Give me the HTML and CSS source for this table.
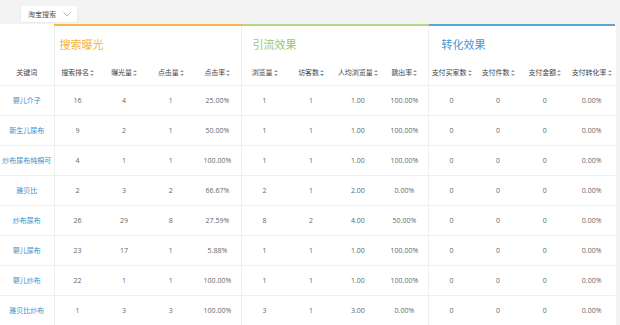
FILE: index.html
```html
<!DOCTYPE html>
<html lang="zh">
<head>
<meta charset="utf-8">
<link rel="stylesheet" href="styles.css">
</head>
<body>
<div class="topbar">
  <div class="select">淘宝搜索
    <svg class="chev" width="8" height="5" viewBox="0 0 8 5"><path d="M0.5 0.5 L4 4 L7.5 0.5" fill="none" stroke="#b5b5b5" stroke-width="1"/></svg>
  </div>
</div>
<div class="panel">
<table class="grid">
  <colgroup>
    <col class="kw"><col span="12" class="c">
  </colgroup>
  <thead>
    <tr class="groups">
      <th class="blank"></th>
      <th colspan="4" class="g g1">搜索曝光</th>
      <th colspan="4" class="g g2">引流效果</th>
      <th colspan="4" class="g g3">转化效果</th>
    </tr>
    <tr class="heads">
      <th class="sep">关键词</th>
      <th>搜索排名<i class="sort"></i></th>
      <th>曝光量<i class="sort"></i></th>
      <th>点击量<i class="sort"></i></th>
      <th class="sep">点击率<i class="sort"></i></th>
      <th>浏览量<i class="sort"></i></th>
      <th>访客数<i class="sort active"></i></th>
      <th>人均浏览量<i class="sort"></i></th>
      <th class="sep">跳出率<i class="sort"></i></th>
      <th>支付买家数<i class="sort"></i></th>
      <th>支付件数<i class="sort"></i></th>
      <th>支付金额<i class="sort"></i></th>
      <th>支付转化率<i class="sort"></i></th>
    </tr>
  </thead>
  <tbody>
    <tr><td class="sep link">婴儿介子</td><td>16</td><td>4</td><td>1</td><td class="sep">25.00%</td><td>1</td><td>1</td><td>1.00</td><td class="sep">100.00%</td><td>0</td><td>0</td><td>0</td><td>0.00%</td></tr>
    <tr><td class="sep link">新生儿尿布</td><td>9</td><td>2</td><td>1</td><td class="sep">50.00%</td><td>1</td><td>1</td><td>1.00</td><td class="sep">100.00%</td><td>0</td><td>0</td><td>0</td><td>0.00%</td></tr>
    <tr><td class="sep link">炒布尿布纯棉可</td><td>4</td><td>1</td><td>1</td><td class="sep">100.00%</td><td>1</td><td>1</td><td>1.00</td><td class="sep">100.00%</td><td>0</td><td>0</td><td>0</td><td>0.00%</td></tr>
    <tr><td class="sep link">雅贝比</td><td>2</td><td>3</td><td>2</td><td class="sep">66.67%</td><td>2</td><td>1</td><td>2.00</td><td class="sep">0.00%</td><td>0</td><td>0</td><td>0</td><td>0.00%</td></tr>
    <tr><td class="sep link">炒布尿布</td><td>26</td><td>29</td><td>8</td><td class="sep">27.59%</td><td>8</td><td>2</td><td>4.00</td><td class="sep">50.00%</td><td>0</td><td>0</td><td>0</td><td>0.00%</td></tr>
    <tr><td class="sep link">婴儿尿布</td><td>23</td><td>17</td><td>1</td><td class="sep">5.88%</td><td>1</td><td>1</td><td>1.00</td><td class="sep">100.00%</td><td>0</td><td>0</td><td>0</td><td>0.00%</td></tr>
    <tr><td class="sep link">婴儿炒布</td><td>22</td><td>1</td><td>1</td><td class="sep">100.00%</td><td>1</td><td>1</td><td>1.00</td><td class="sep">100.00%</td><td>0</td><td>0</td><td>0</td><td>0.00%</td></tr>
    <tr><td class="sep link">雅贝比炒布</td><td>1</td><td>3</td><td>3</td><td class="sep">100.00%</td><td>3</td><td>1</td><td>3.00</td><td class="sep">0.00%</td><td>0</td><td>0</td><td>0</td><td>0.00%</td></tr>
  </tbody>
</table>
</div>
</body>
</html>
```

FILE: styles.css
```css
* { box-sizing: border-box; }
html, body {
  margin: 0;
  padding: 0;
  background: #f3f3f3;
  font-family: "Open Sans", "Noto Sans CJK SC", sans-serif;
  overflow: hidden;
}
.topbar {
  height: 24px;
  padding-left: 20px;
}
.select {
  display: inline-flex;
  align-items: center;
  width: 58px;
  height: 17px;
  padding: 0 6px 0 7px;
  background: #fff;
  border: 1px solid #ececec;
  border-top: none;
  font-size: 7px;
  color: #555;
  justify-content: space-between;
}
.chev { display: block; }
.panel {
  width: 616px;
  height: 301px;
  background: #fff;
}
.grid {
  border-collapse: collapse;
  table-layout: fixed;
  width: 615px;
}
.kw { width: 54px; }
.grid th, .grid td {
  padding: 0;
  text-align: center;
  font-size: 7px;
  white-space: nowrap;
  overflow: hidden;
}
.grid .groups th { height: 34px; }
.grid .groups .blank { border-right: 1px solid #efefef; }
.grid .g {
  text-align: left;
  font-size: 11px;
  font-weight: normal;
  border-right: 1px solid #efefef;
  padding-top: 2px;
}
.grid .g1 { border-top: 2px solid #f7b84a; color: #f5b23c; padding-left: 5px; }
.grid .g2 { border-top: 2px solid #b3d88a; color: #98c86a; padding-left: 11px; }
.grid .g3 { border-top: 2px solid #5aa4d8; color: #3f97d3; padding-left: 13px; border-right: none; }
.grid .heads th {
  height: 26px;
  font-weight: normal;
  color: #444;
  border-bottom: 1px solid #f0f0f0;
}
.grid td {
  height: 30px;
  color: #666;
  border-bottom: 1px solid #f0f0f0;
}
.grid .sep { border-right: 1px solid #efefef; }
.grid td.link { color: #3a8cc9; }
.sort {
  display: inline-block;
  width: 4px;
  height: 6px;
  margin-left: 1px;
  vertical-align: -1px;
  position: relative;
}
.sort::before, .sort::after {
  content: "";
  position: absolute;
  left: 0;
  border-left: 2px solid transparent;
  border-right: 2px solid transparent;
}
.sort::before { top: 0; border-bottom: 2px solid #999; }
.sort::after { bottom: 0; border-top: 2px solid #999; }
.sort.active::after { border-top-color: #3a8cc9; }
```
